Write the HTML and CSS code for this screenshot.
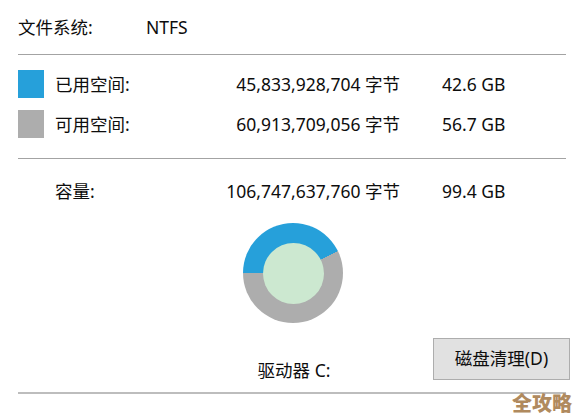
FILE: index.html
```html
<!DOCTYPE html>
<html lang="zh-CN">
<head>
<meta charset="utf-8">
<title>属性</title>
<link rel="stylesheet" href="styles.css">
</head>
<body>
<div class="panel">
  <div class="fs-row">
    <span class="fs-label">文件系统:</span>
    <span class="fs-value">NTFS</span>
  </div>
  <div class="divider"></div>
  <div class="stats">
    <span class="swatch used"></span>
    <span class="label">已用空间:</span>
    <span class="bytes">45,833,928,704 字节</span>
    <span class="size">42.6 GB</span>

    <span class="swatch free"></span>
    <span class="label">可用空间:</span>
    <span class="bytes">60,913,709,056 字节</span>
    <span class="size">56.7 GB</span>
  </div>
  <div class="divider second"></div>
  <div class="stats capacity">
    <span class="swatch none"></span>
    <span class="label">容量:</span>
    <span class="bytes">106,747,637,760 字节</span>
    <span class="size">99.4 GB</span>
  </div>
  <div class="chart">
    <div class="donut"><div class="hole"></div></div>
  </div>
  <div class="drive-row">
    <span></span>
    <span class="drive">驱动器 C:</span>
    <div class="btn-cell"><button class="btn">磁盘清理(D)</button></div>
  </div>
  <div class="divider bottom"></div>
</div>
<div class="watermark">全攻略</div>
</body>
</html>
```
FILE: styles.css
```css
html, body {
  margin: 0;
  padding: 0;
  background: #ffffff;
}
body {
  width: 577px;
  height: 417px;
  overflow: hidden;
  position: relative;
  font-family: "Noto Sans", "Noto Sans CJK SC", sans-serif;
  font-size: 17.5px;
  color: #0d0d0d;
}
.panel {
  margin-left: 18px;
  width: 552px;
  padding-top: 15px;
}
.fs-row {
  display: flex;
  height: 24px;
  line-height: 24px;
}
.fs-label {
  width: 128px;
}
.divider {
  height: 1px;
  background: #a3a3a3;
  margin-right: 4px;
  margin-top: 15px;
}
.stats {
  display: grid;
  grid-template-columns: 37px 140px 205px 42px auto;
  grid-auto-rows: 28px;
  row-gap: 12px;
  align-items: center;
  margin-top: 15px;
  line-height: 24px;
}
.swatch {
  width: 26px;
  height: 28px;
}
.swatch.used { background: #26a0da; }
.swatch.free { background: #adadad; }
.swatch.none { background: transparent; }
.bytes {
  text-align: right;
}
.size {
  grid-column: 5;
}
.divider.second {
  margin-top: 20px;
}
.stats.capacity {
  margin-top: 18px;
}
.chart {
  display: flex;
  justify-content: center;
  margin-top: 18px;
  padding-right: 2px;
}
.donut {
  width: 100px;
  height: 100px;
  border-radius: 50%;
  background: conic-gradient(from 270deg, #26a0da 0deg 154deg, #adadad 154deg 360deg);
  display: flex;
  align-items: center;
  justify-content: center;
}
.hole {
  width: 61px;
  height: 61px;
  border-radius: 50%;
  background: #cce8d0;
}
.drive-row {
  display: grid;
  grid-template-columns: 1fr auto 1fr;
  margin-top: 15px;
  height: 42px;
}
.drive {
  align-self: end;
  line-height: 22px;
  transform: translateY(1px);
}
.btn-cell {
  display: flex;
  justify-content: flex-end;
}
.btn {
  width: 137px;
  height: 42px;
  background: #e1e1e1;
  border: 1px solid #adadad;
  border-radius: 0;
  font-family: "Noto Sans", "Noto Sans CJK SC", sans-serif;
  font-size: 17.5px;
  color: #0d0d0d;
  padding: 0 0 4px 0;
  margin: 0;
}
.divider.bottom {
  margin-top: 12px;
  height: 2px;
  background: #bdbdbd;
}
.watermark {
  position: absolute;
  right: 5px;
  bottom: 3px;
  font-family: "Noto Sans CJK SC", sans-serif;
  font-weight: 900;
  font-size: 20px;
  line-height: 22px;
  color: #b08a5e;
}
```
